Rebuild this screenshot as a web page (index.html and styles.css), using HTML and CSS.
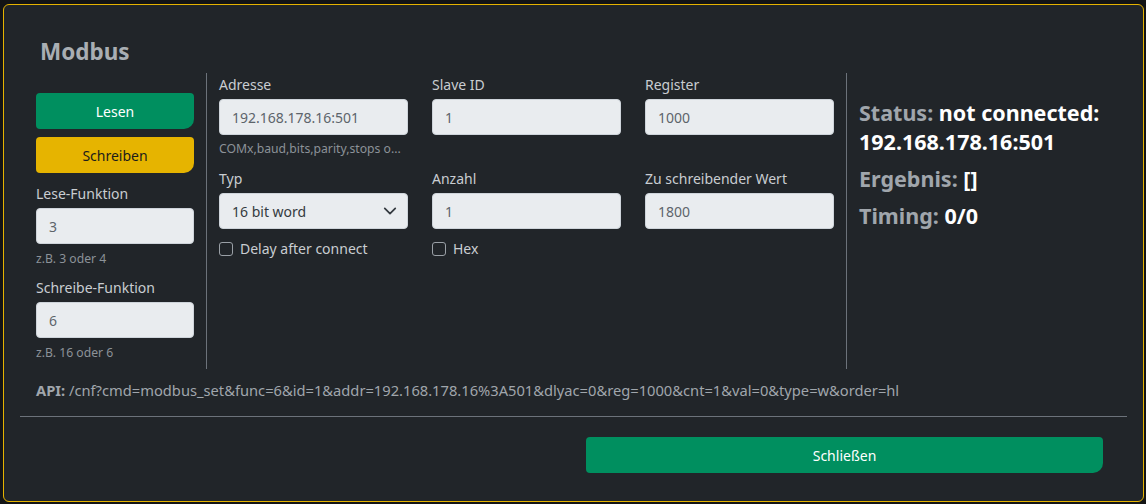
FILE: index.html
```html
<!DOCTYPE html>
<html lang="de">
<head>
    <meta charset="UTF-8">
    <meta name="viewport" content="width=device-width, initial-scale=1.0">
    <title>Modbus</title>
    <link rel="stylesheet" href="styles.css">
</head>
<body>
    <div class="modal">
        <h4 class="modal-title">Modbus</h4>
        <div class="modal-body">
            <div class="main-row">
                <!-- Spalte links: Aktionen und Funktionen -->
                <div class="col-left">
                    <button class="btn btn-green">Lesen</button>
                    <button class="btn btn-yellow">Schreiben</button>
                    <label class="lbl lbl-first">Lese-Funktion</label>
                    <input class="inp" type="text" value="3">
                    <div class="hint">z.B. 3 oder 4</div>
                    <label class="lbl">Schreibe-Funktion</label>
                    <input class="inp" type="text" value="6">
                    <div class="hint">z.B. 16 oder 6</div>
                </div>

                <!-- Spalte Mitte: Parameter -->
                <div class="col-mid">
                    <div class="field">
                        <label class="lbl">Adresse</label>
                        <input class="inp" type="text" value="192.168.178.16:501">
                        <div class="hint">COMx,baud,bits,parity,stops o...</div>
                    </div>
                    <div class="field">
                        <label class="lbl">Slave ID</label>
                        <input class="inp" type="text" value="1">
                    </div>
                    <div class="field">
                        <label class="lbl">Register</label>
                        <input class="inp" type="text" value="1000">
                    </div>
                    <div class="field">
                        <label class="lbl">Typ</label>
                        <div class="select">
                            <span>16 bit word</span>
                            <svg width="14" height="14" viewBox="0 0 16 16"><path d="M2 5l6 6 6-6" fill="none" stroke="#343a40" stroke-width="2" stroke-linecap="round" stroke-linejoin="round"/></svg>
                        </div>
                        <label class="check"><span class="box"></span>Delay after connect</label>
                    </div>
                    <div class="field">
                        <label class="lbl">Anzahl</label>
                        <input class="inp" type="text" value="1">
                        <label class="check"><span class="box"></span>Hex</label>
                    </div>
                    <div class="field">
                        <label class="lbl">Zu schreibender Wert</label>
                        <input class="inp" type="text" value="1800">
                    </div>
                </div>

                <!-- Spalte rechts: Ergebnis -->
                <div class="col-right">
                    <p class="res"><span class="key">Status:</span> not connected:<br>192.168.178.16:501</p>
                    <p class="res"><span class="key">Ergebnis:</span> []</p>
                    <p class="res"><span class="key">Timing:</span> 0/0</p>
                </div>
            </div>
            <div class="api"><b>API:</b> /cnf?cmd=modbus_set&amp;func=6&amp;id=1&amp;addr=192.168.178.16%3A501&amp;dlyac=0&amp;reg=1000&amp;cnt=1&amp;val=0&amp;type=w&amp;order=hl</div>
        </div>
        <hr class="sep">
        <div class="modal-footer">
            <button class="btn btn-green btn-close">Schließen</button>
        </div>
    </div>
</body>
</html>
```

FILE: styles.css
```css
/* Hintergrund hinter dem Dialog */
body {
    margin: 0;
    background-color: #131415;
    font-family: 'Noto Sans', 'Open Sans', sans-serif;
    color: #c9cdd1;
}
.modal {
    box-sizing: border-box;
    width: 1141px;
    height: 498px;
    margin: 4px 0 0 3px;
    background-color: #212529;
    border: 1px solid #e5b300;
    border-radius: 6px;
}
.modal-title {
    margin: 0;
    padding: 32px 0 0 36px;
    font-size: 22.5px;
    line-height: 30px;
    font-weight: 700;
    color: #a9aeb3;
}
.modal-body {
    padding: 0 16px;
}
.main-row {
    display: flex;
    margin-top: 6px;
}
.col-left {
    width: 158px;
    padding: 20px 12px 7px 16px;
    border-right: 1px solid #6c727a;
    display: flex;
    flex-direction: column;
}
.col-mid {
    width: 614px;
    padding: 1px 13px 0 12px;
    border-right: 1px solid #6c727a;
    display: grid;
    grid-template-columns: repeat(3, 189px);
    column-gap: 24px;
    row-gap: 10px;
    align-content: start;
}
.col-right {
    flex: 1;
    padding: 25px 0 0 12px;
}
.btn {
    box-sizing: border-box;
    height: 36px;
    border: none;
    border-radius: 4px 4px 10px 4px;
    font-family: inherit;
    font-size: 14px;
    cursor: pointer;
}
.btn-green {
    background-color: #008f5f;
    color: #fff;
}
.btn-yellow {
    background-color: #e6b400;
    color: #1b1b1b;
    margin-top: 8px;
}
.lbl {
    display: block;
    font-size: 14px;
    line-height: 22px;
    margin: 9px 0 3px;
    color: #c9cdd1;
}
.lbl-first {
    margin-top: 10px;
}
.field .lbl {
    margin-top: 0;
}
.inp {
    box-sizing: border-box;
    width: 100%;
    height: 36px;
    padding: 0 12px;
    border: 1px solid #ced4da;
    border-radius: 4px;
    background-color: #e9ecef;
    color: #5d646b;
    font-family: inherit;
    font-size: 14px;
}
.hint {
    font-size: 12.2px;
    line-height: 18px;
    margin-top: 6px;
    color: #8c9298;
    white-space: nowrap;
}
.field .hint {
    margin-top: 5px;
}
.select {
    box-sizing: border-box;
    height: 36px;
    padding: 0 10px 0 12px;
    border: 1px solid #ced4da;
    border-radius: 4px;
    background-color: #e9ecef;
    color: #343a40;
    font-size: 14px;
    display: flex;
    align-items: center;
    justify-content: space-between;
}
.check {
    display: flex;
    align-items: center;
    gap: 7px;
    margin-top: 10px;
    font-size: 14px;
    line-height: 20px;
    color: #c9cdd1;
}
.box {
    box-sizing: border-box;
    width: 14px;
    height: 14px;
    border: 1px solid #9aa0a6;
    border-radius: 3px;
}
.res {
    margin: 0 0 8px;
    font-size: 21.5px;
    line-height: 29px;
    font-weight: 700;
    color: #fff;
}
.res .key {
    color: #a0a6ac;
}
.api {
    padding: 10px 0 0 16px;
    font-size: 14.7px;
    line-height: 22px;
    color: #a0a6ac;
}
.sep {
    margin: 15px 16px 0;
    border: none;
    border-top: 1px solid #6c727a;
}
.modal-footer {
    display: flex;
    justify-content: flex-end;
    padding: 20px 40px 0 0;
}
.btn-close {
    width: 517px;
}
```
